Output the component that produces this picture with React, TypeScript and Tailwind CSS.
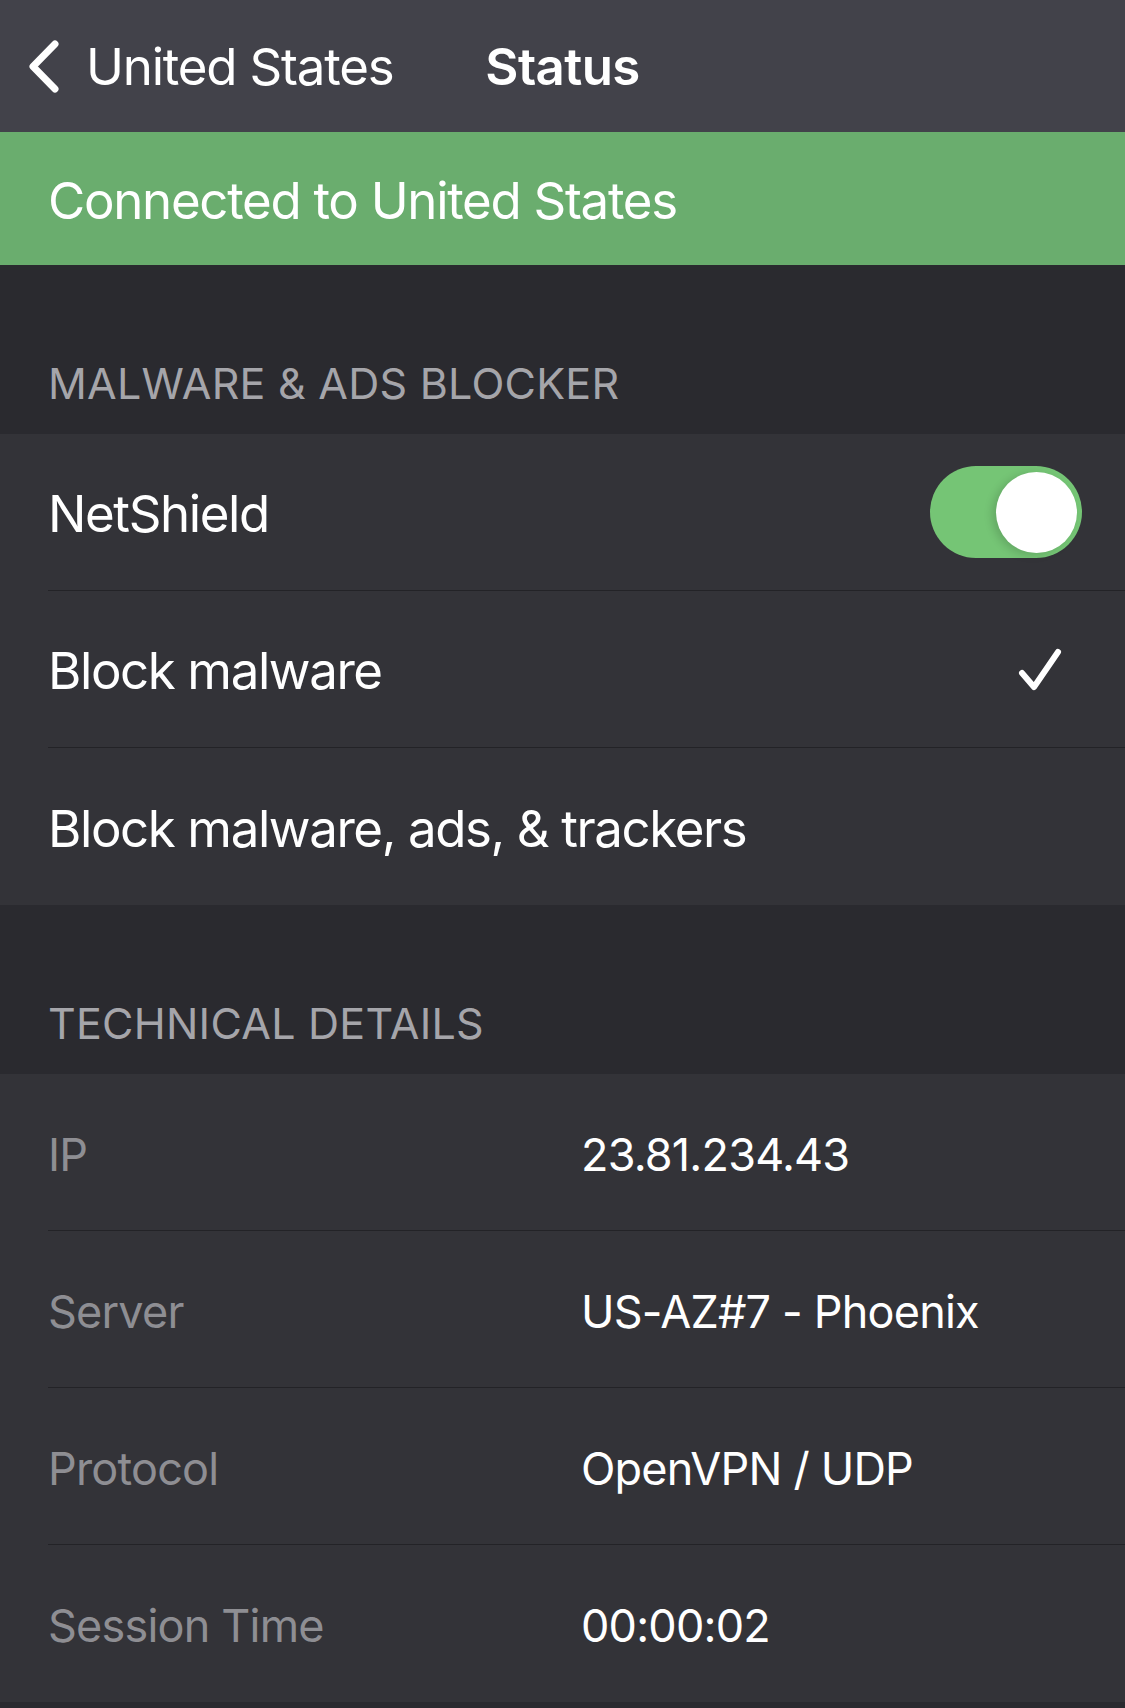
import React from "react";

const font = { fontFamily: "Inter, 'Noto Sans', sans-serif" };

function Chevron() {
  return (
    <svg width="33" height="53" viewBox="0 0 33 53" fill="none">
      <polyline points="28,4 6,26.5 28,49" stroke="white" strokeWidth="7" strokeLinecap="round" strokeLinejoin="round" />
    </svg>
  );
}

function Check() {
  return (
    <svg width="44" height="43" viewBox="0 0 44 43" fill="none">
      <polyline points="4,25 16,39 40,4" stroke="white" strokeWidth="6" strokeLinecap="round" strokeLinejoin="round" />
    </svg>
  );
}

function SectionHeader({ title }: { title: string }) {
  return (
    <div className="h-[169px] bg-[#2a2a2f] flex items-end pl-[48px] pb-[29px]">
      <span className="text-[43px] leading-none text-[#a5a5aa] tracking-[0.25px]">{title}</span>
    </div>
  );
}

function Row({ children, last }: { children: React.ReactNode; last?: boolean }) {
  return (
    <div className="bg-[#333338] pl-[48px]">
      <div className={`h-[157px] flex items-center pr-[43px] ${last ? "" : "border-b border-[#232327]"}`}>{children}</div>
    </div>
  );
}

function Detail({ label, value, last }: { label: string; value: string; last?: boolean }) {
  return (
    <Row last={last}>
      <span className="w-[533px] pt-[5px] text-[45px] text-[#8e8e93] tracking-[-0.8px]">{label}</span>
      <span className="pt-[5px] text-[45px] text-white tracking-[-0.8px]">{value}</span>
    </Row>
  );
}

export default function App() {
  return (
    <div className="w-[1125px] h-[1708px] bg-[#2a2a2f] overflow-hidden" style={font}>
      <div className="h-[132px] bg-[#42424a] grid grid-cols-[1fr_auto_1fr] items-center">
        <div className="flex items-center pl-[27px] gap-[26px]">
          <Chevron />
          <span className="pt-[2px] text-[51px] text-white tracking-[-1.2px]">United States</span>
        </div>
        <span className="pt-[2px] text-[51px] font-semibold text-white tracking-[-0.6px]">Status</span>
        <div />
      </div>
      <div className="h-[133px] bg-[#6aad6e] flex items-center pl-[48px]">
        <span className="pt-[6px] text-[51px] text-white tracking-[-1.3px]">Connected to United States</span>
      </div>
      <SectionHeader title="MALWARE & ADS BLOCKER" />
      <Row>
        <span className="flex-1 pt-[5px] text-[51px] text-white tracking-[-1.4px]">NetShield</span>
        <div className="w-[152px] h-[92px] rounded-full bg-[#75c575] flex items-center justify-end pr-[5px]">
          <div className="w-[81px] h-[81px] rounded-full bg-white shadow-[-4px_2px_8px_rgba(0,0,0,0.15)]" />
        </div>
      </Row>
      <Row>
        <span className="flex-1 pt-[5px] text-[51px] text-white tracking-[-1.4px]">Block malware</span>
        <div className="pr-[20px]">
          <Check />
        </div>
      </Row>
      <Row last>
        <span className="flex-1 pt-[5px] text-[51px] text-white tracking-[-1.4px]">Block malware, ads, &amp; trackers</span>
      </Row>
      <SectionHeader title="TECHNICAL DETAILS" />
      <Detail label="IP" value="23.81.234.43" />
      <Detail label="Server" value="US-AZ#7 - Phoenix" />
      <Detail label="Protocol" value="OpenVPN / UDP" />
      <Detail label="Session Time" value="00:00:02" last />
    </div>
  );
}
